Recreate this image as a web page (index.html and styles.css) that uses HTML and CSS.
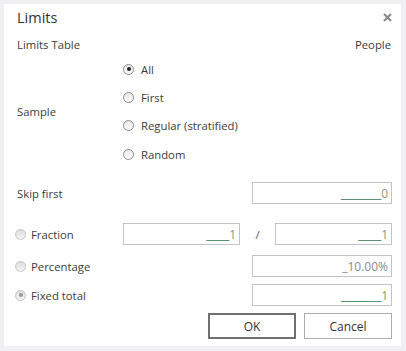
FILE: index.html
```html
<!DOCTYPE html>
<html lang="en-US">
  <head>
    <title>Limits</title>
    <link rel="stylesheet" href="styles.css">
  </head>
  <body>
    <div class="dialog">
      <div class="header">
        <span class="title">Limits</span>
        <svg class="close" width="9" height="9" viewBox="0 0 9 9">
          <path d="M1 1 L8 8 M8 1 L1 8" stroke="#8a8a8a" stroke-width="2.2"/>
        </svg>
      </div>

      <div class="content">
        <div class="row table-row">
          <span class="label">Limits Table</span>
          <span class="table-name">People</span>
        </div>

        <div class="sample">
          <span class="label sample-label">Sample</span>
          <div class="options">
            <div class="option"><span class="radio checked"></span>All</div>
            <div class="option"><span class="radio"></span>First</div>
            <div class="option"><span class="radio"></span>Regular (stratified)</div>
            <div class="option"><span class="radio"></span>Random</div>
          </div>
        </div>

        <div class="row field skip">
          <span class="label">Skip first</span>
          <div class="box wide"><span class="blank">_______</span><span class="digit">0</span></div>
        </div>

        <div class="row field fraction">
          <span class="label choice"><span class="radio off"></span>Fraction</span>
          <div class="box half"><span class="blank">____</span><span class="digit">1</span></div>
          <span class="slash">/</span>
          <div class="box half"><span class="blank">____</span><span class="digit">1</span></div>
        </div>

        <div class="row field percentage">
          <span class="label choice"><span class="radio off"></span>Percentage</span>
          <div class="box wide"><span class="grey">_10.00%</span></div>
        </div>

        <div class="row field fixed">
          <span class="label choice"><span class="radio off checked"></span>Fixed total</span>
          <div class="box wide"><span class="blank">_______</span><span class="digit">1</span></div>
        </div>

        <div class="buttons">
          <button class="btn default" type="button">OK</button>
          <button class="btn" type="button">Cancel</button>
        </div>
      </div>
    </div>
  </body>
</html>
```

FILE: styles.css
```css
html, body {
  margin: 0;
  padding: 0;
}

body {
  background-color: #f0f0f3;
  font-family: "Open Sans", "Noto Sans", sans-serif;
  font-size: 11.3px;
  color: #3c3c3c;
}

.dialog {
  margin: 4px;
  width: 397px;
  height: 342px;
  background-color: #fff;
  box-sizing: border-box;
}

.header {
  height: 26px;
  display: flex;
  align-items: center;
  justify-content: space-between;
  padding: 0 9px 0 13px;
}

.title {
  font-size: 14.5px;
  color: #333;
}

.content {
  padding: 0 9px 0 13px;
}

.row {
  display: flex;
  align-items: center;
}

.table-row {
  height: 20px;
  margin-top: 4px;
  justify-content: space-between;
}

.table-name {
  margin-right: 1px;
}

.sample {
  display: flex;
  align-items: center;
  margin-top: 1px;
}

.sample-label {
  width: 106px;
}

.option {
  height: 28.3px;
  display: flex;
  align-items: center;
}

.radio {
  display: inline-block;
  width: 9px;
  height: 9px;
  border: 1px solid #8c8c8c;
  border-radius: 50%;
  background: linear-gradient(#e8e8e8, #fff);
  margin-right: 7px;
  position: relative;
}

.radio.checked::after {
  content: "";
  position: absolute;
  left: 2.5px;
  top: 2.5px;
  width: 4px;
  height: 4px;
  border-radius: 50%;
  background-color: #222;
}

.radio.off {
  border-color: #c4c4c4;
  background: linear-gradient(#dcdcdc, #f6f6f6);
}

.radio.off.checked::after {
  background-color: #999;
}

.field {
  height: 22px;
}

.field .label {
  flex: 1;
}

.choice {
  display: flex;
  align-items: center;
  margin-left: -2px;
}

.choice .radio {
  margin-right: 5px;
}

.skip {
  margin-top: 14px;
}

.fraction {
  margin-top: 19px;
}

.fraction .label {
  flex: none;
  width: 108px;
}

.percentage {
  margin-top: 10px;
}

.fixed {
  margin-top: 7px;
}

.box {
  height: 22px;
  box-sizing: border-box;
  border: 1px solid #c3c3c3;
  display: flex;
  align-items: center;
  justify-content: flex-end;
  padding-right: 3px;
  font-size: 12px;
}

.wide {
  width: 140px;
}

.half {
  width: 117px;
}

.slash {
  width: 35px;
  text-align: center;
  color: #556;
}

.blank {
  color: #4f8a68;
  font-family: "DejaVu Sans", sans-serif;
  font-size: 11.5px;
}

.digit {
  color: #8e9a6a;
}

.grey {
  color: #8a8a8a;
}

.buttons {
  display: flex;
  justify-content: flex-end;
  gap: 8px;
  margin-top: 7px;
}

.btn {
  width: 88px;
  height: 26px;
  background-color: #fff;
  border: 1px solid #adadad;
  font-family: "Open Sans", "Noto Sans", sans-serif;
  font-size: 12px;
  color: #333;
  padding: 0;
}

.btn.default {
  border: 2px solid #707070;
}
```
